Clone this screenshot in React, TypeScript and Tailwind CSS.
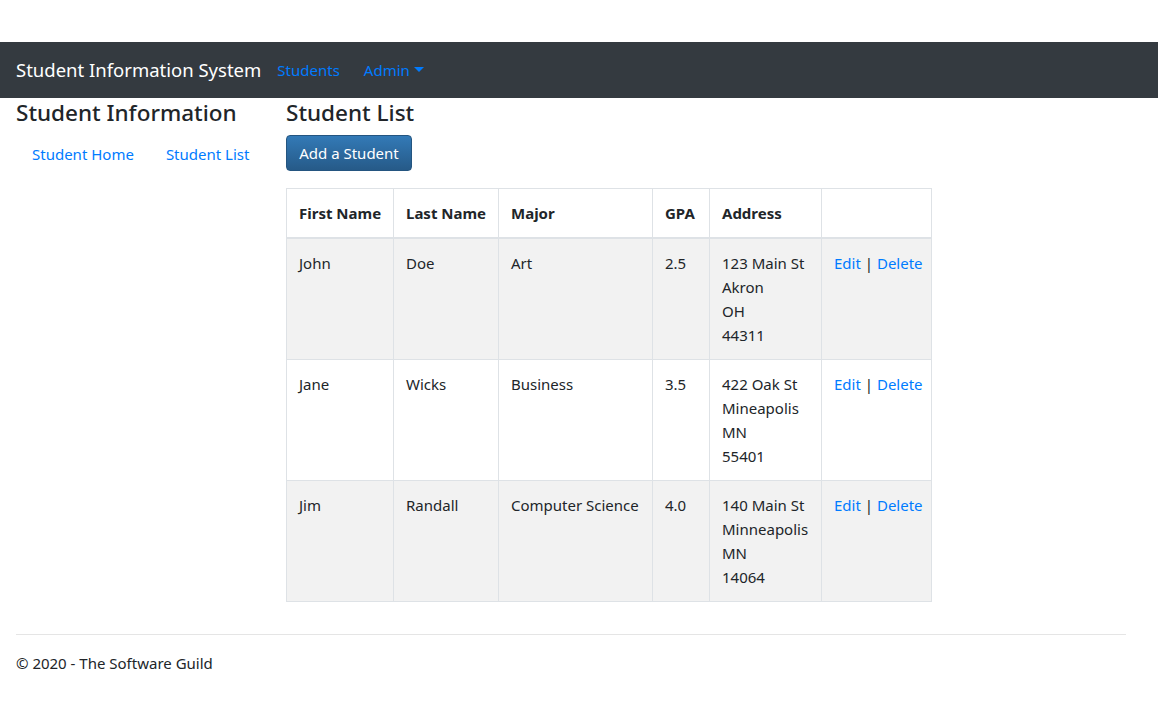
type Student = {
  first: string;
  last: string;
  major: string;
  gpa: string;
  address: string[];
};

const students: Student[] = [
  { first: "John", last: "Doe", major: "Art", gpa: "2.5", address: ["123 Main St", "Akron", "OH", "44311"] },
  { first: "Jane", last: "Wicks", major: "Business", gpa: "3.5", address: ["422 Oak St", "Mineapolis", "MN", "55401"] },
  { first: "Jim", last: "Randall", major: "Computer Science", gpa: "4.0", address: ["140 Main St", "Minneapolis", "MN", "14064"] },
];

const th = "border border-[#dee2e6] border-b-2 px-3 py-3 text-left align-top font-bold whitespace-nowrap";
const td = "border border-[#dee2e6] px-3 py-3 align-top whitespace-nowrap";

export default function App() {
  return (
    <div className="min-h-[727px] bg-white text-[15px] leading-6 text-[#212529]" style={{ fontFamily: '"Noto Sans", "Open Sans", sans-serif' }}>
      <div className="h-[42px]" />
      <nav className="flex h-14 items-center bg-[#343a40] px-4">
        <span className="mr-4 text-[18.5px] text-white">Student Information System</span>
        <a className="px-0 text-[#007bff]">Students</a>
        <a className="ml-6 flex items-center gap-1 text-[#007bff]">
          Admin
          <span className="mt-[-2px] inline-block h-0 w-0 border-x-[5px] border-t-[5px] border-x-transparent border-t-[#007bff]" />
        </a>
      </nav>

      <div className="flex px-4">
        <aside className="w-[270px] shrink-0">
          <h2 className="mt-0 text-[22.5px] leading-[30px] font-medium">Student Information</h2>
          <div className="mt-1.5 flex gap-8 px-4 py-2">
            <a className="text-[#007bff]">Student Home</a>
            <a className="text-[#007bff]">Student List</a>
          </div>
        </aside>

        <main className="flex-1">
          <h2 className="text-[22.5px] leading-[30px] font-medium">Student List</h2>
          <button className="mt-[7px] h-9 w-[126px] rounded border border-[#245580] bg-gradient-to-b from-[#337ab7] to-[#265a88] text-white">
            Add a Student
          </button>
          <table className="mt-[17px] w-[646px] table-fixed border-collapse">
            <thead>
              <tr>
                <th className={`${th} w-[107px]`}>First Name</th>
                <th className={`${th} w-[105px]`}>Last Name</th>
                <th className={`${th} w-[154px]`}>Major</th>
                <th className={`${th} w-[57px]`}>GPA</th>
                <th className={`${th} w-[112px]`}>Address</th>
                <th className={th}></th>
              </tr>
            </thead>
            <tbody>
              {students.map((s, i) => (
                <tr key={s.first} className={i % 2 === 0 ? "bg-[#f2f2f2]" : "bg-white"}>
                  <td className={td}>{s.first}</td>
                  <td className={td}>{s.last}</td>
                  <td className={td}>{s.major}</td>
                  <td className={td}>{s.gpa}</td>
                  <td className={td}>
                    {s.address.map((line) => (
                      <div key={line}>{line}</div>
                    ))}
                  </td>
                  <td className={td}>
                    <a className="text-[#007bff]">Edit</a> | <a className="text-[#007bff]">Delete</a>
                  </td>
                </tr>
              ))}
            </tbody>
          </table>
        </main>
      </div>

      <footer className="mx-4 mt-8 mr-8 border-t border-[#e5e5e5] pt-4">
        <p>© 2020 - The Software Guild</p>
      </footer>
    </div>
  );
}
